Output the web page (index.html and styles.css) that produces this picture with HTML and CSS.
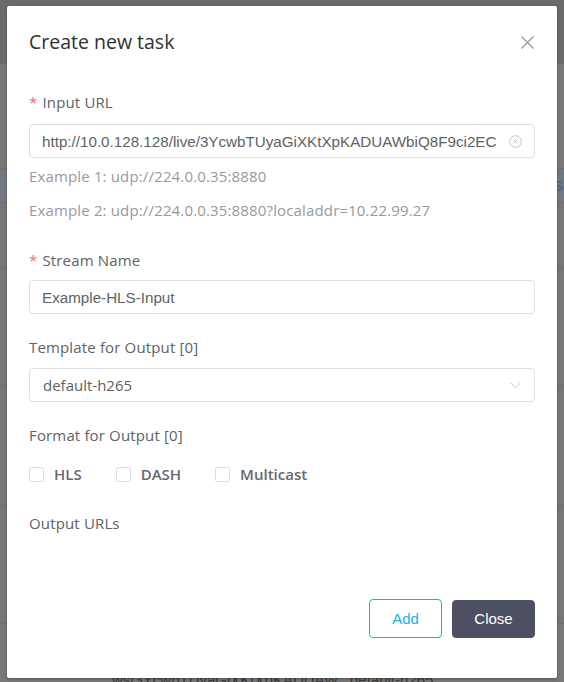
FILE: index.html
```html
<!DOCTYPE html>
<html>
<head>
<meta charset="utf-8">
<link rel="stylesheet" href="styles.css">
</head>
<body>
<div class="page">
  <div class="topbar"></div>
  <div class="row r1"></div>
  <div class="row r2"><span class="link">Se</span></div>
  <div class="row r3"></div>
  <div class="row r4"></div>
  <div class="row r5"></div>
  <div class="row r6"></div>
  <div class="row r7"><span class="bgtext">ws/3YcwbTUyaGiXKtXpKADUAW</span><span class="bgtext2">default-h265</span></div>
</div>

<div class="overlay">
  <div class="dialog">
    <div class="dialog-header">
      <span class="dialog-title">Create new task</span>
      <svg class="close-icon" width="13" height="13" viewBox="0 0 13 13">
        <path d="M0.5 0.5 L12.5 12.5 M12.5 0.5 L0.5 12.5" stroke="#909399" stroke-width="1.1" fill="none"/>
      </svg>
    </div>

    <div class="dialog-body">
      <div class="label label-first"><span class="req">*</span> Input URL</div>
      <div class="input input-url">
        <span class="input-text">http://10.0.128.128/live/3YcwbTUyaGiXKtXpKADUAWbiQ8F9ci2EC</span>
        <svg class="clear-icon" width="13" height="13" viewBox="0 0 13 13">
          <circle cx="6.5" cy="6.5" r="5.8" stroke="#c0c4cc" stroke-width="1" fill="none"/>
          <path d="M4.5 4.5 L8.5 8.5 M8.5 4.5 L4.5 8.5" stroke="#c0c4cc" stroke-width="1" fill="none"/>
        </svg>
      </div>
      <div class="hint hint-1">Example 1: udp://224.0.0.35:8880</div>
      <div class="hint hint-2">Example 2: udp://224.0.0.35:8880?localaddr=10.22.99.27</div>

      <div class="label label-stream"><span class="req">*</span> Stream Name</div>
      <div class="input input-stream"><span class="input-text">Example-HLS-Input</span></div>

      <div class="label label-template">Template for Output [0]</div>
      <div class="input select">
        <span class="select-text">default-h265</span>
        <svg class="chevron" width="11" height="7" viewBox="0 0 11 7">
          <path d="M0.5 0.8 L5.5 5.8 L10.5 0.8" stroke="#c0c4cc" stroke-width="1" fill="none"/>
        </svg>
      </div>

      <div class="label label-format">Format for Output [0]</div>
      <div class="checks">
        <label class="check"><span class="box"></span><span class="check-text">HLS</span></label>
        <label class="check"><span class="box"></span><span class="check-text">DASH</span></label>
        <label class="check"><span class="box"></span><span class="check-text">Multicast</span></label>
      </div>

      <div class="label label-output">Output URLs</div>
    </div>

    <div class="dialog-footer">
      <button class="btn btn-add">Add</button>
      <button class="btn btn-close">Close</button>
    </div>
  </div>
</div>
</body>
</html>
```

FILE: styles.css
```css
html, body {
  margin: 0;
  padding: 0;
}

body {
  width: 564px;
  height: 682px;
  overflow: hidden;
  background: #777777;
  font-family: "Open Sans", "Liberation Sans", sans-serif;
  position: relative;
}

.page {
  display: flex;
  flex-direction: column;
}

.topbar {
  height: 63px;
  background: #6b6b6b;
  border-bottom: 1px solid #6a6a6a;
}

.row {
  border-bottom: 1px solid #707070;
  position: relative;
}

.r1 { height: 104px; }
.r2 { height: 33px; background: #737781; }
.r3 { height: 64px; }
.r4 { height: 117px; }
.r5 { height: 119px; }
.r6 { height: 117px; }
.r7 { height: 60px; border-bottom: none; }

.link {
  display: block;
  padding-left: 553px;
  font-family: "Liberation Sans", sans-serif;
  font-size: 15px;
  line-height: 33px;
  color: #3a6b8a;
}

.bgtext, .bgtext2 {
  position: absolute;
  top: 47px;
  font-family: "Liberation Sans", sans-serif;
  font-size: 15px;
  color: #3a3a3a;
}
.bgtext { left: 112px; }
.bgtext2 { left: 350px; }

/* overlay + dialog */
.overlay {
  position: absolute;
  inset: 0;
}

.dialog {
  position: absolute;
  left: 7px;
  top: 6px;
  width: 550px;
  height: 672px;
  background: #ffffff;
  border-radius: 2px;
  box-shadow: 0 1px 3px rgba(0, 0, 0, 0.3);
  box-sizing: border-box;
  padding: 0 22px 0 22px;
  display: flex;
  flex-direction: column;
}

.dialog-header {
  display: flex;
  justify-content: space-between;
  align-items: flex-start;
  padding-top: 24px;
  height: 24px;
}

.dialog-title {
  font-size: 19.5px;
  line-height: 24px;
  color: #303133;
}

.close-icon {
  margin-top: 6px;
  margin-right: 1px;
}

.dialog-body {
  display: flex;
  flex-direction: column;
}

.label {
  font-size: 15px;
  line-height: 20px;
  color: #606266;
  letter-spacing: 0.15px;
}

.req {
  color: #f56c6c;
  margin-right: 1px;
}

.label-first { margin-top: 38px; }
.label-stream { margin-top: 30px; }
.label-template { margin-top: 23px; }
.label-format { margin-top: 23px; }
.label-output { margin-top: 29px; }

.input {
  box-sizing: border-box;
  height: 34px;
  border: 1px solid #dcdfe6;
  border-radius: 4px;
  display: flex;
  align-items: center;
  padding: 0 12px 0 12px;
  background: #fff;
}

.input-url { margin-top: 12px; }
.input-stream { margin-top: 10px; }
.select { margin-top: 11px; justify-content: space-between; }

.input-text {
  font-family: "Liberation Sans", Arial, sans-serif;
  font-size: 15.2px;
  color: #606266;
  white-space: nowrap;
  overflow: hidden;
  flex: 1;
}

.clear-icon {
  flex: none;
  margin-left: 6px;
}

.select-text {
  font-size: 15px;
  color: #606266;
  padding-left: 1px;
}

.chevron {
  margin-right: 1px;
}

.hint {
  font-size: 15px;
  line-height: 20px;
  color: #97999e;
  letter-spacing: 0.15px;
}

.hint-1 { margin-top: 8px; }
.hint-2 { margin-top: 14px; }

.checks {
  display: flex;
  gap: 34px;
  margin-top: 19px;
  height: 20px;
  align-items: center;
}

.check {
  display: flex;
  align-items: center;
  gap: 10px;
}

.box {
  box-sizing: border-box;
  width: 15px;
  height: 15px;
  border: 1px solid #dcdfe6;
  border-radius: 2px;
  background: #fff;
}

.check-text {
  font-size: 15px;
  line-height: 20px;
  font-weight: 600;
  color: #66686e;
}

.dialog-footer {
  margin-top: auto;
  margin-bottom: 40px;
  display: flex;
  justify-content: flex-end;
  align-items: center;
  gap: 10px;
}

.btn {
  font-family: "Liberation Sans", Arial, sans-serif;
  font-size: 15px;
  border-radius: 4px;
  cursor: pointer;
  box-sizing: border-box;
}

.btn-add {
  width: 73px;
  height: 39px;
  background: #ffffff;
  border: 1px solid #1cb0e0;
  color: #1cb0e0;
}

.btn-close {
  width: 83px;
  height: 38px;
  background: #4d4f62;
  border: 1px solid #4d4f62;
  color: #ffffff;
}
```
